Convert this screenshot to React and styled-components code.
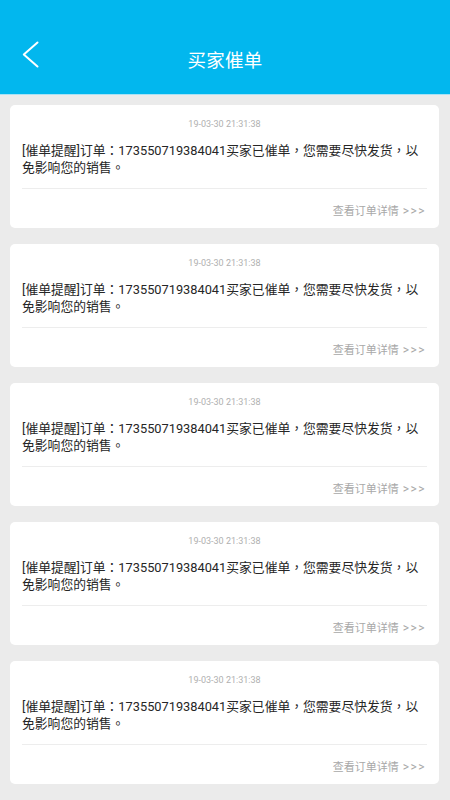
import React from "react";
import styled, { createGlobalStyle } from "styled-components";

const Global = createGlobalStyle`
  html, body { margin: 0; padding: 0; background: #ebebeb; }
  body { font-family: "Noto Sans CJK SC", "Noto Sans", sans-serif; }
  * { box-sizing: border-box; }
`;

const Page = styled.div`
  min-height: 800px;
  background: #ebebeb;
  display: flex;
  flex-direction: column;
`;

const Header = styled.header`
  height: 95px;
  background: #02b7ee;
  border-bottom: 1px solid #a9e2f5;
  display: flex;
  align-items: flex-end;
`;

const NavBar = styled.div`
  position: relative;
  width: 100%;
  height: 71px;
  display: flex;
  align-items: center;
  justify-content: center;
`;

const BackButton = styled.button`
  position: absolute;
  left: 22px;
  top: 18px;
  width: 17px;
  height: 27px;
  padding: 0;
  border: 0;
  background: transparent;
  display: flex;
`;

const Title = styled.h1`
  margin: 0;
  font-size: 18.5px;
  font-weight: 400;
  color: #ffffff;
  letter-spacing: 0.3px;
`;

const List = styled.main`
  display: flex;
  flex-direction: column;
  gap: 16px;
  padding: 10px 11px 16px 10px;
`;

const Card = styled.section`
  background: #ffffff;
  border-radius: 5px;
  height: 123px;
  padding: 13px 12px 0 12px;
  display: flex;
  flex-direction: column;
`;

const Time = styled.div`
  height: 12px;
  text-align: center;
  font-family: "Roboto", "Noto Sans", sans-serif;
  font-size: 9px;
  line-height: 12px;
  color: #b0b0b0;
`;

const Message = styled.p`
  margin: 12px 0 0 0;
  font-family: "Roboto", "Noto Sans CJK TC", sans-serif;
  font-size: 12.8px;
  line-height: 17px;
  height: 34px;
  color: #262626;
`;

const Divider = styled.hr`
  margin: 12px 0 0 0;
  border: 0;
  height: 1px;
  flex-shrink: 0;
  background: #ededed;
`;

const Link = styled.a`
  margin-top: 14px;
  height: 14px;
  align-self: flex-end;
  display: flex;
  align-items: baseline;
  font-size: 11px;
  line-height: 14px;
  color: #a8a8a8;
  text-decoration: none;
  margin-right: 1px;
`;

const Arrows = styled.span`
  font-family: "Roboto", "Noto Sans", sans-serif;
  font-size: 12px;
  line-height: 14px;
  letter-spacing: 1.5px;
  margin-left: 4px;
`;

const items = Array.from({ length: 5 }, (_, i) => ({
  id: i,
  time: "19-03-30 21:31:38",
  text: "[催单提醒]订单：173550719384041买家已催单，您需要尽快发货，以免影响您的销售。",
}));

export default function App() {
  return (
    <Page>
      <Global />
      <Header>
        <NavBar>
          <BackButton aria-label="返回">
            <svg width="17" height="27" viewBox="0 0 17 27" fill="none">
              <path d="M15.5 1.5 L1.8 13.5 L15.5 25.5" stroke="#ffffff" strokeWidth="2" strokeLinecap="round" strokeLinejoin="round" />
            </svg>
          </BackButton>
          <Title>买家催单</Title>
        </NavBar>
      </Header>
      <List>
        {items.map((it) => (
          <Card key={it.id}>
            <Time>{it.time}</Time>
            <Message>{it.text}</Message>
            <Divider />
            <Link>
              查看订单详情<Arrows>&gt;&gt;&gt;</Arrows>
            </Link>
          </Card>
        ))}
      </List>
    </Page>
  );
}
